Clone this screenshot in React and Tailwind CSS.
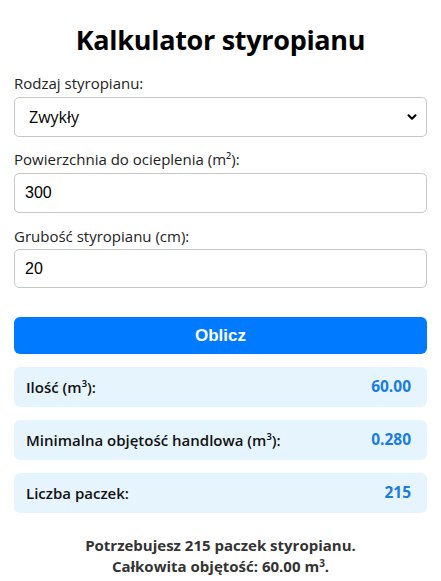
import { ChevronDown } from 'lucide-react'

const RESULTS = [
  { label: 'Ilość (m³):', value: '60.00' },
  { label: 'Minimalna objętość handlowa (m³):', value: '0.280' },
  { label: 'Liczba paczek:', value: '215' },
]

export default function App() {
  return (
    <div className="min-h-screen bg-white px-[14px] pt-[20px] text-[16px] text-black font-['Open_Sans',sans-serif]">
      <h1 className="text-center text-[27px] font-bold leading-[40px] tracking-[-0.3px]">Kalkulator styropianu</h1>

      <div className="mt-[12px]">
        <label className="block text-[15px] leading-[22px] text-[#222]">Rodzaj styropianu:</label>
        <div className="relative mt-[3px]">
          <div className="flex h-[40px] items-center rounded-[5px] border border-[#c8c8c8] bg-white pl-[14px] text-[16px]">
            Zwykły
          </div>
          <ChevronDown className="absolute right-[8px] top-[13px] h-[14px] w-[14px]" strokeWidth={3.5} />
        </div>
      </div>

      <div className="mt-[11px]">
        <label className="block text-[15px] leading-[22px] text-[#222]">
          Powierzchnia do ocieplenia (m²):
        </label>
        <div className="mt-[3px] flex h-[40px] items-center rounded-[5px] border border-[#c8c8c8] pl-[10px] font-['Liberation_Sans',sans-serif] text-[16px]">
          300
        </div>
      </div>

      <div className="mt-[12px]">
        <label className="block text-[15px] leading-[22px] text-[#222]">Grubość styropianu (cm):</label>
        <div className="mt-[2px] flex h-[39px] items-center rounded-[5px] border border-[#c8c8c8] pl-[10px] font-['Liberation_Sans',sans-serif] text-[16px]">
          20
        </div>
      </div>

      <button
        type="button"
        className="mt-[29px] flex h-[37px] w-full items-center justify-center rounded-[6px] bg-[#007bff] font-['Liberation_Sans',sans-serif] text-[17px] font-bold text-white"
      >
        Oblicz
      </button>

      <div className="mt-[13px] flex flex-col gap-[13px]">
        {RESULTS.map((r) => (
          <div
            key={r.label}
            className="flex h-[40px] items-center justify-between rounded-[6px] bg-[#e6f5fd] pl-[12px] pr-[16px]"
          >
            <span className="text-[15px] font-semibold text-[#111]">{r.label}</span>
            <span className="text-[15.5px] font-bold text-[#1a7be0]">{r.value}</span>
          </div>
        ))}
      </div>

      <div className="mt-[22px] text-center text-[15px] font-bold leading-[21px] text-[#333]">
        <p>Potrzebujesz 215 paczek styropianu.</p>
        <p>
          Całkowita objętość: 60.00 m<sup className="text-[10px]">3</sup>.
        </p>
      </div>
    </div>
  )
}
